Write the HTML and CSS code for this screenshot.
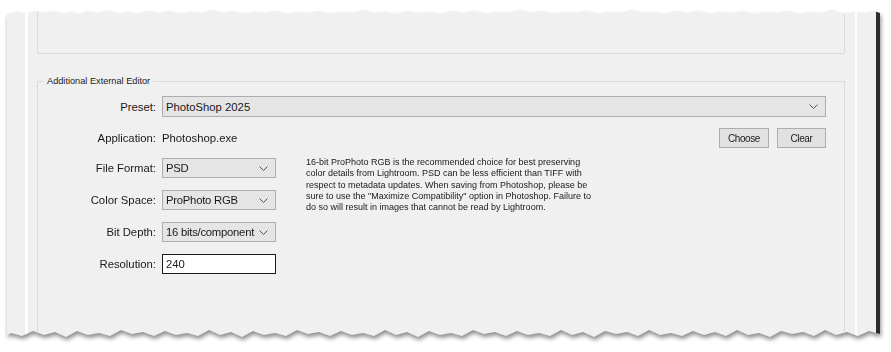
FILE: index.html
```html
<!DOCTYPE html>
<html>
<head>
<meta charset="utf-8">
<link rel="stylesheet" href="styles.css">
</head>
<body>
<div class="sheet">
  <div class="paper">
    <div class="gutter-l"></div>
    <div class="stripe"></div>
    <div class="gap-l"></div>
    <div class="main">
      <div class="upper-box"></div>
      <div class="groupbox">
        <div class="legend">Additional External Editor</div>
        <div class="form">
          <div class="row preset-row">
            <div class="label">Preset:</div>
            <div class="select wide">
              <span class="sel-text">PhotoShop 2025</span>
              <svg class="chev" width="9" height="5" viewBox="0 0 9 5"><polyline points="0.5,0.5 4.5,4.5 8.5,0.5" fill="none" stroke="#555" stroke-width="1"/></svg>
            </div>
          </div>
          <div class="row app-row">
            <div class="label">Application:</div>
            <div class="value">Photoshop.exe</div>
            <div class="buttons">
              <div class="btn btn-choose">Choose</div>
              <div class="btn btn-clear">Clear</div>
            </div>
          </div>
          <div class="lower">
            <div class="fields">
              <div class="row">
                <div class="label">File Format:</div>
                <div class="select small">
                  <span class="sel-text">PSD</span>
                  <svg class="chev" width="9" height="5" viewBox="0 0 9 5"><polyline points="0.5,0.5 4.5,4.5 8.5,0.5" fill="none" stroke="#555" stroke-width="1"/></svg>
                </div>
              </div>
              <div class="row">
                <div class="label">Color Space:</div>
                <div class="select small">
                  <span class="sel-text">ProPhoto RGB</span>
                  <svg class="chev" width="9" height="5" viewBox="0 0 9 5"><polyline points="0.5,0.5 4.5,4.5 8.5,0.5" fill="none" stroke="#555" stroke-width="1"/></svg>
                </div>
              </div>
              <div class="row">
                <div class="label">Bit Depth:</div>
                <div class="select small">
                  <span class="sel-text">16 bits/component</span>
                  <svg class="chev" width="9" height="5" viewBox="0 0 9 5"><polyline points="0.5,0.5 4.5,4.5 8.5,0.5" fill="none" stroke="#555" stroke-width="1"/></svg>
                </div>
              </div>
              <div class="row">
                <div class="label">Resolution:</div>
                <div class="input">240</div>
              </div>
            </div>
            <div class="desc">16-bit ProPhoto RGB is the recommended choice for best preserving<br>color details from Lightroom. PSD can be less efficient than TIFF with<br>respect to metadata updates. When saving from Photoshop, please be<br>sure to use the "Maximize Compatibility" option in Photoshop. Failure to<br>do so will result in images that cannot be read by Lightroom.</div>
          </div>
        </div>
      </div>
    </div>
    <div class="gap-r"></div>
    <div class="stripe-r"></div>
    <div class="gutter-r"></div>
    <div class="dark"></div>
  </div>
</div>
</body>
</html>
```

FILE: styles.css
```css
html, body {
  margin: 0;
  padding: 0;
  background: #ffffff;
}
body {
  width: 891px;
  height: 352px;
  overflow: hidden;
  font-family: "Liberation Sans", Arial, sans-serif;
  color: #1a1a1a;
}
.sheet {
  margin: 8px 0 0 7px;
  width: 873px;
  height: 332px;
  filter: drop-shadow(1px 3px 2px rgba(0,0,0,0.45));
}
.paper {
  width: 873px;
  height: 332px;
  background: #f0f0f0;
  display: flex;
  clip-path: polygon(0px 6px, 10px 4px, 18px 6px, 26px 3px, 37px 5px, 46px 3px, 55px 6px, 64px 4px, 72px 7px, 80px 3px, 92px 5px, 100px 2px, 110px 6px, 120px 4px, 131px 6px, 140px 3px, 152px 5px, 163px 3px, 172px 6px, 183px 4px, 195px 5px, 205px 2px, 214px 5px, 225px 3px, 236px 6px, 246px 4px, 258px 5px, 268px 3px, 279px 6px, 290px 4px, 300px 5px, 311px 3px, 322px 6px, 333px 4px, 344px 5px, 356px 2px, 366px 5px, 378px 4px, 389px 6px, 400px 3px, 411px 5px, 422px 4px, 433px 6px, 444px 3px, 456px 5px, 467px 3px, 478px 6px, 489px 4px, 500px 5px, 512px 2px, 523px 5px, 534px 3px, 546px 6px, 557px 4px, 568px 5px, 579px 3px, 590px 6px, 601px 4px, 612px 5px, 624px 2px, 635px 5px, 646px 4px, 657px 6px, 668px 3px, 680px 5px, 691px 3px, 702px 6px, 713px 4px, 724px 5px, 735px 3px, 747px 6px, 758px 4px, 769px 5px, 780px 3px, 792px 6px, 803px 4px, 814px 5px, 825px 2px, 836px 6px, 847px 4px, 858px 5px, 867px 3px, 873px 5px,
    873px 326px, 862px 323px, 851px 328px, 840px 324px, 829px 327px, 818px 322px, 807px 328px, 796px 324px, 785px 326px, 774px 323px, 763px 329px, 752px 325px, 741px 327px, 730px 322px, 719px 328px, 708px 324px, 697px 327px, 686px 323px, 675px 328px, 664px 325px, 653px 327px, 642px 322px, 631px 328px, 620px 324px, 609px 326px, 598px 323px, 587px 329px, 576px 324px, 565px 327px, 554px 322px, 543px 328px, 532px 325px, 521px 327px, 510px 323px, 499px 328px, 488px 324px, 477px 326px, 466px 322px, 455px 328px, 444px 325px, 433px 327px, 422px 323px, 411px 329px, 400px 324px, 389px 327px, 378px 322px, 367px 328px, 356px 325px, 345px 327px, 334px 323px, 323px 328px, 312px 324px, 301px 326px, 290px 322px, 279px 328px, 268px 325px, 257px 327px, 246px 323px, 235px 329px, 224px 324px, 213px 327px, 202px 322px, 191px 328px, 180px 325px, 169px 327px, 158px 323px, 147px 328px, 136px 324px, 125px 326px, 114px 322px, 103px 328px, 92px 325px, 81px 327px, 70px 323px, 59px 329px, 48px 324px, 37px 327px, 26px 323px, 15px 328px, 4px 325px, 0px 327px);
}
.gutter-l { width: 18px; flex: none; }
.stripe { width: 3px; flex: none; background: #ffffff; }
.gap-l { width: 9px; flex: none; }
.main { width: 808px; flex: none; display: flex; flex-direction: column; }
.gap-r { width: 10px; flex: none; }
.stripe-r { width: 2px; flex: none; background: #ffffff; }
.gutter-r { width: 19px; flex: none; }
.dark { width: 4px; flex: none; background: #2a2e29; }

.upper-box {
  height: 45px;
  flex: none;
  border: 1px solid #dadada;
  border-top: none;
}
.groupbox {
  margin-top: 27px;
  flex: 1;
  border: 1px solid #dadada;
  border-bottom: none;
  padding-right: 18px;
}
.legend {
  margin: -8px 0 0 6px;
  width: fit-content;
  padding: 0 3px;
  background: #f0f0f0;
  font-size: 9.2px;
  line-height: 14px;
  color: #1a1a1a;
}
.form {
  margin-top: 8px;
  display: flex;
  flex-direction: column;
}
.row {
  display: flex;
  align-items: center;
  height: 20px;
}
.label {
  width: 118px;
  flex: none;
  text-align: right;
  margin-right: 6px;
  font-size: 11.3px;
  white-space: nowrap;
}
.preset-row { height: 21px; }
.app-row { margin-top: 11px; }
.select {
  box-sizing: border-box;
  height: 100%;
  background: #e5e5e5;
  border: 1px solid #adadad;
  display: flex;
  align-items: center;
  justify-content: space-between;
  padding: 0 7px 0 3px;
  font-size: 11.3px;
  white-space: nowrap;
}
.select.wide { flex: 1; }
.select.small { width: 114px; flex: none; }
.select.small .sel-text { letter-spacing: -0.25px; }
.chev { flex: none; }
.value { flex: 1; font-size: 11.3px; }
.buttons { display: flex; gap: 8px; }
.btn {
  box-sizing: border-box;
  height: 20px;
  background: #e1e1e1;
  border: 1px solid #adadad;
  font-size: 10px;
  letter-spacing: -0.4px;
  display: flex;
  align-items: center;
  justify-content: center;
}
.btn-choose { width: 50px; }
.btn-clear { width: 49px; }
.lower {
  margin-top: 10px;
  display: flex;
}
.fields {
  display: flex;
  flex-direction: column;
  gap: 12px;
}
.input {
  box-sizing: border-box;
  width: 114px;
  height: 20px;
  background: #ffffff;
  border: 1px solid #1a1a1a;
  padding: 0 3px;
  font-size: 11.3px;
  display: flex;
  align-items: center;
}
.desc {
  margin-left: 30px;
  margin-top: -1px;
  font-size: 9px;
  line-height: 11.3px;
  color: #1a1a1a;
  white-space: nowrap;
}
```
